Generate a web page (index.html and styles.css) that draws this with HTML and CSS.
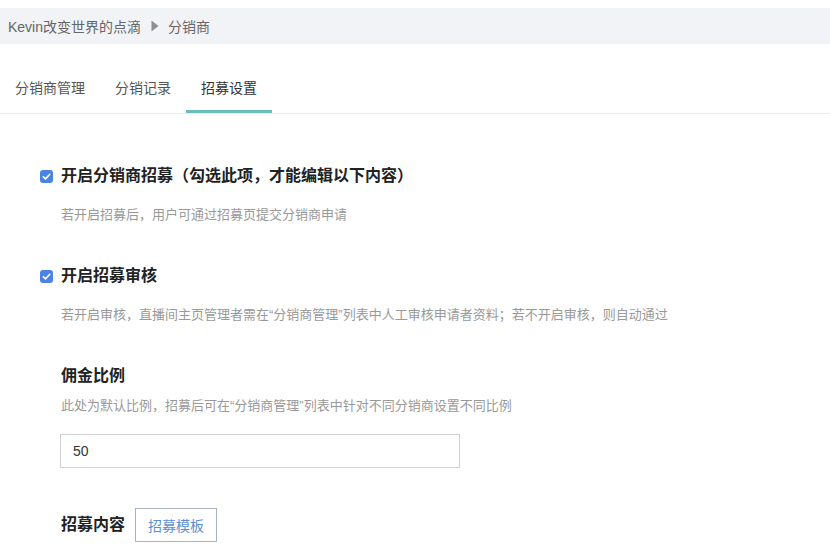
FILE: index.html
```html
<!DOCTYPE html>
<html lang="zh-CN">
<head>
<meta charset="utf-8">
<title>分销商</title>
<link rel="stylesheet" href="styles.css">
</head>
<body>
<div class="page">
  <div class="breadcrumb">
    <span class="crumb">Kevin改变世界的点滴</span>
    <svg class="crumb-arrow" width="8" height="12" viewBox="0 0 8 12"><path d="M0.5 0.5 L7.5 6 L0.5 11.5 Z" fill="#8c8f96"/></svg>
    <span class="crumb">分销商</span>
  </div>

  <nav class="tabs">
    <a class="tab">分销商管理</a>
    <a class="tab">分销记录</a>
    <a class="tab active">招募设置</a>
  </nav>

  <main class="content">
    <section class="block">
      <label class="check-row">
        <span class="checkbox"><svg width="13" height="13" viewBox="0 0 13 13"><path d="M3.3 6.7 L5.5 8.9 L9.8 4.3" fill="none" stroke="#fff" stroke-width="1.6" stroke-linecap="round" stroke-linejoin="round"/></svg></span>
        <span class="check-label">开启分销商招募（勾选此项，才能编辑以下内容）</span>
      </label>
      <p class="desc indent">若开启招募后，用户可通过招募页提交分销商申请</p>
    </section>

    <section class="block">
      <label class="check-row">
        <span class="checkbox"><svg width="13" height="13" viewBox="0 0 13 13"><path d="M3.3 6.7 L5.5 8.9 L9.8 4.3" fill="none" stroke="#fff" stroke-width="1.6" stroke-linecap="round" stroke-linejoin="round"/></svg></span>
        <span class="check-label">开启招募审核</span>
      </label>
      <p class="desc indent">若开启审核，直播间主页管理者需在“分销商管理”列表中人工审核申请者资料；若不开启审核，则自动通过</p>
    </section>

    <section class="block indent">
      <h3 class="field-title">佣金比例</h3>
      <p class="desc small-gap">此处为默认比例，招募后可在“分销商管理”列表中针对不同分销商设置不同比例</p>
      <div class="input">50</div>
    </section>

    <section class="block indent inline-field">
      <h3 class="field-title">招募内容</h3>
      <button class="btn">招募模板</button>
    </section>
  </main>
</div>
</body>
</html>
```

FILE: styles.css
```css
* { box-sizing: border-box; }
html, body { margin: 0; padding: 0; background: #fff; }
body {
  font-family: "Liberation Sans", "Noto Sans CJK SC", sans-serif;
  color: #333;
}
.page { padding-top: 8px; }

.breadcrumb {
  height: 36px;
  background: #f2f3f6;
  display: flex;
  align-items: center;
  padding-left: 8px;
  font-size: 14px;
  color: #666;
}
.crumb-arrow { margin: 0 9px 0 10px; }

.tabs {
  display: flex;
  margin-top: 34px;
  border-bottom: 1px solid #ebebeb;
}
.tab {
  display: block;
  padding: 0 15px 12px;
  font-size: 14px;
  line-height: 20px;
  color: #555;
  border-bottom: 3px solid transparent;
}
.tab.active {
  color: #333;
  border-bottom-color: #6cbfb9;
}

.content { padding: 51px 0 0 40px; }
.block { margin-bottom: 40px; }
.block:last-child { margin-bottom: 0; }
.indent { padding-left: 21px; }

.check-row {
  display: flex;
  align-items: center;
  height: 22px;
}
.checkbox {
  width: 13px;
  height: 13px;
  border-radius: 3px;
  background: #4a83e2;
  display: flex;
  margin-right: 8px;
}
.check-label {
  font-size: 16px;
  font-weight: bold;
  line-height: 22px;
  color: #222;
}
.desc {
  margin: 18px 0 0;
  font-size: 13px;
  line-height: 20px;
  color: #999;
}
.desc.small-gap { margin-top: 9px; }

.field-title {
  margin: 0;
  font-size: 16px;
  font-weight: bold;
  line-height: 22px;
  color: #222;
}
.input {
  margin-top: 18px;
  margin-left: -1px;
  width: 400px;
  height: 34px;
  border: 1px solid #d0d0d0;
  padding-left: 12px;
  display: flex;
  align-items: center;
  font-size: 14px;
  color: #333;
}
.inline-field {
  display: flex;
  align-items: center;
}
.btn {
  margin-left: 10px;
  width: 82px;
  height: 34px;
  background: #fff;
  border: 1px solid #a7b3c2;
  font-family: inherit;
  font-size: 14px;
  color: #5b8fd4;
  padding: 0;
}
```
